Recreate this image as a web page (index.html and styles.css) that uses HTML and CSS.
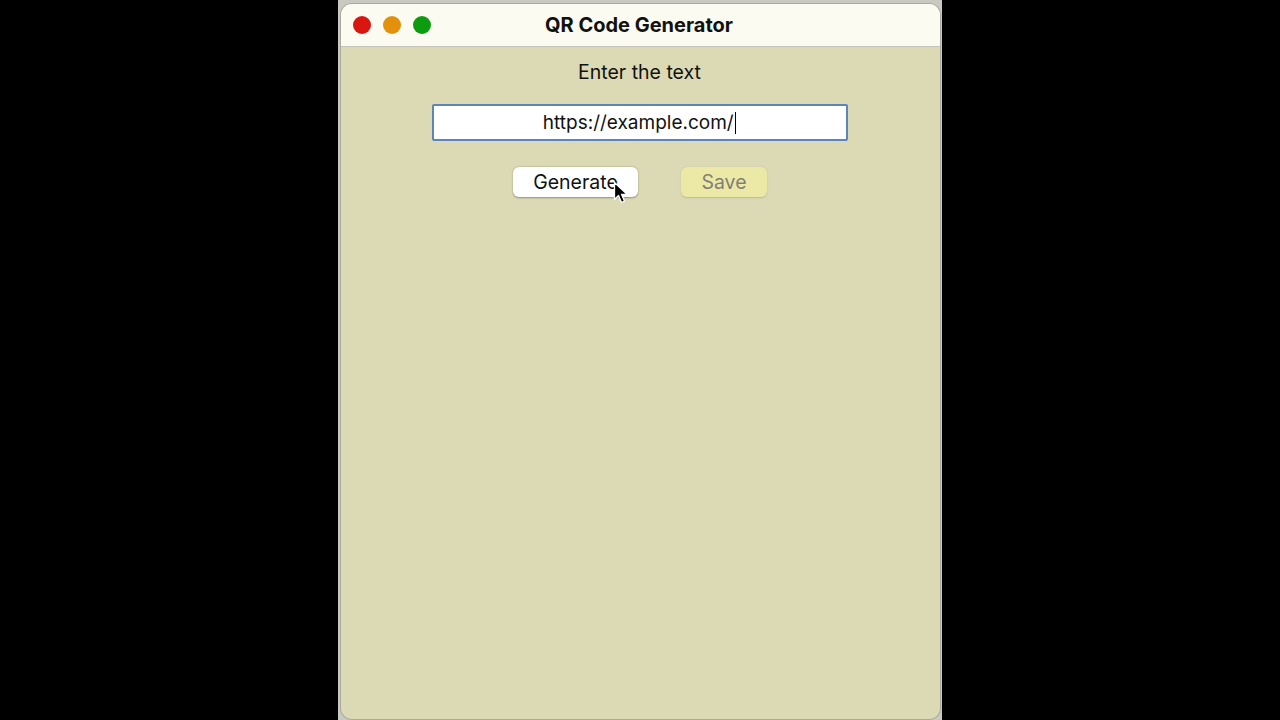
FILE: index.html
```html
<!DOCTYPE html>
<html>
<head>
<meta charset="utf-8">
<link rel="stylesheet" href="styles.css">
</head>
<body>
<div class="stage">
  <div class="backdrop">
    <div class="window">
      <div class="titlebar">
        <div class="lights">
          <span class="light red"></span>
          <span class="light orange"></span>
          <span class="light green"></span>
        </div>
        <div class="title">QR Code Generator</div>
      </div>
      <div class="content">
        <div class="label">Enter the text</div>
        <div class="input"><span class="value">https://example.com/</span><span class="caret"></span></div>
        <div class="buttons">
          <div class="btn generate">Generate
            <svg class="cursor" width="15" height="24" viewBox="0 0 15 24"><path d="M1.5 1.5 L1.5 18.5 L5.5 14.5 L8.5 21.5 L11.5 20.2 L8.5 13.3 L14 13.3 Z" fill="#000" stroke="#fff" stroke-width="1.3" stroke-linejoin="round"/></svg>
          </div>
          <div class="btn save">Save</div>
        </div>
      </div>
    </div>
  </div>
</div>
</body>
</html>
```
FILE: styles.css
```css
html, body {
  margin: 0;
  padding: 0;
  background: #000;
  width: 1280px;
  height: 720px;
  overflow: hidden;
  font-family: Inter, "Liberation Sans", Arial, sans-serif;
}
.stage {
  display: flex;
  justify-content: center;
  width: 1280px;
  height: 720px;
}
.backdrop {
  width: 604px;
  height: 720px;
  background: #c9c9c2;
  padding: 4px 2px 0 3px;
  box-sizing: border-box;
}
.window {
  width: 599px;
  height: 715px;
  background: #dcdab5;
  border-radius: 11px;
  overflow: hidden;
  box-shadow: 0 0 0 1px #a9a9a0;
  display: flex;
  flex-direction: column;
}
.titlebar {
  height: 42px;
  background: #fbfbf1;
  border-bottom: 1px solid #c4c4b8;
  position: relative;
  display: flex;
  align-items: center;
  justify-content: center;
}
.lights {
  position: absolute;
  left: 12px;
  top: 12px;
  display: flex;
  gap: 12px;
}
.light {
  width: 18px;
  height: 18px;
  border-radius: 50%;
  display: block;
}
.red { background: #d9160f; }
.orange { background: #e3900a; }
.green { background: #0d9b10; }
.title {
  font-weight: bold;
  font-size: 20px;
  color: #111;
  margin-left: -3px;
}
.content {
  display: flex;
  flex-direction: column;
  align-items: center;
  padding-top: 13px;
}
.label {
  font-size: 19.5px;
  color: #111;
  margin-left: -2px;
}
.input {
  margin-top: 20px;
  width: 412px;
  height: 33px;
  background: #fff;
  border: 2px solid #5a86bd;
  border-radius: 2px;
  display: flex;
  align-items: center;
  justify-content: center;
  font-size: 19px;
  color: #111;
  margin-left: -2px;
}
.caret {
  display: inline-block;
  width: 1.5px;
  height: 22px;
  background: #000;
  margin-left: 1px;
}
.buttons {
  display: flex;
  gap: 43px;
  margin-top: 26px;
  margin-left: -1px;
}
.btn {
  height: 30px;
  border-radius: 6px;
  font-size: 19.5px;
  display: flex;
  align-items: center;
  justify-content: center;
  box-sizing: border-box;
  position: relative;
}
.generate {
  width: 125px;
  background: #fff;
  color: #111;
  box-shadow: 0 0.5px 2px rgba(0,0,0,0.35);
}
.save {
  width: 86px;
  background: #ece9a6;
  color: #7f7f78;
  box-shadow: 0 0.5px 1.5px rgba(0,0,0,0.15);
}
.cursor {
  position: absolute;
  left: 100px;
  top: 14px;
}
```
